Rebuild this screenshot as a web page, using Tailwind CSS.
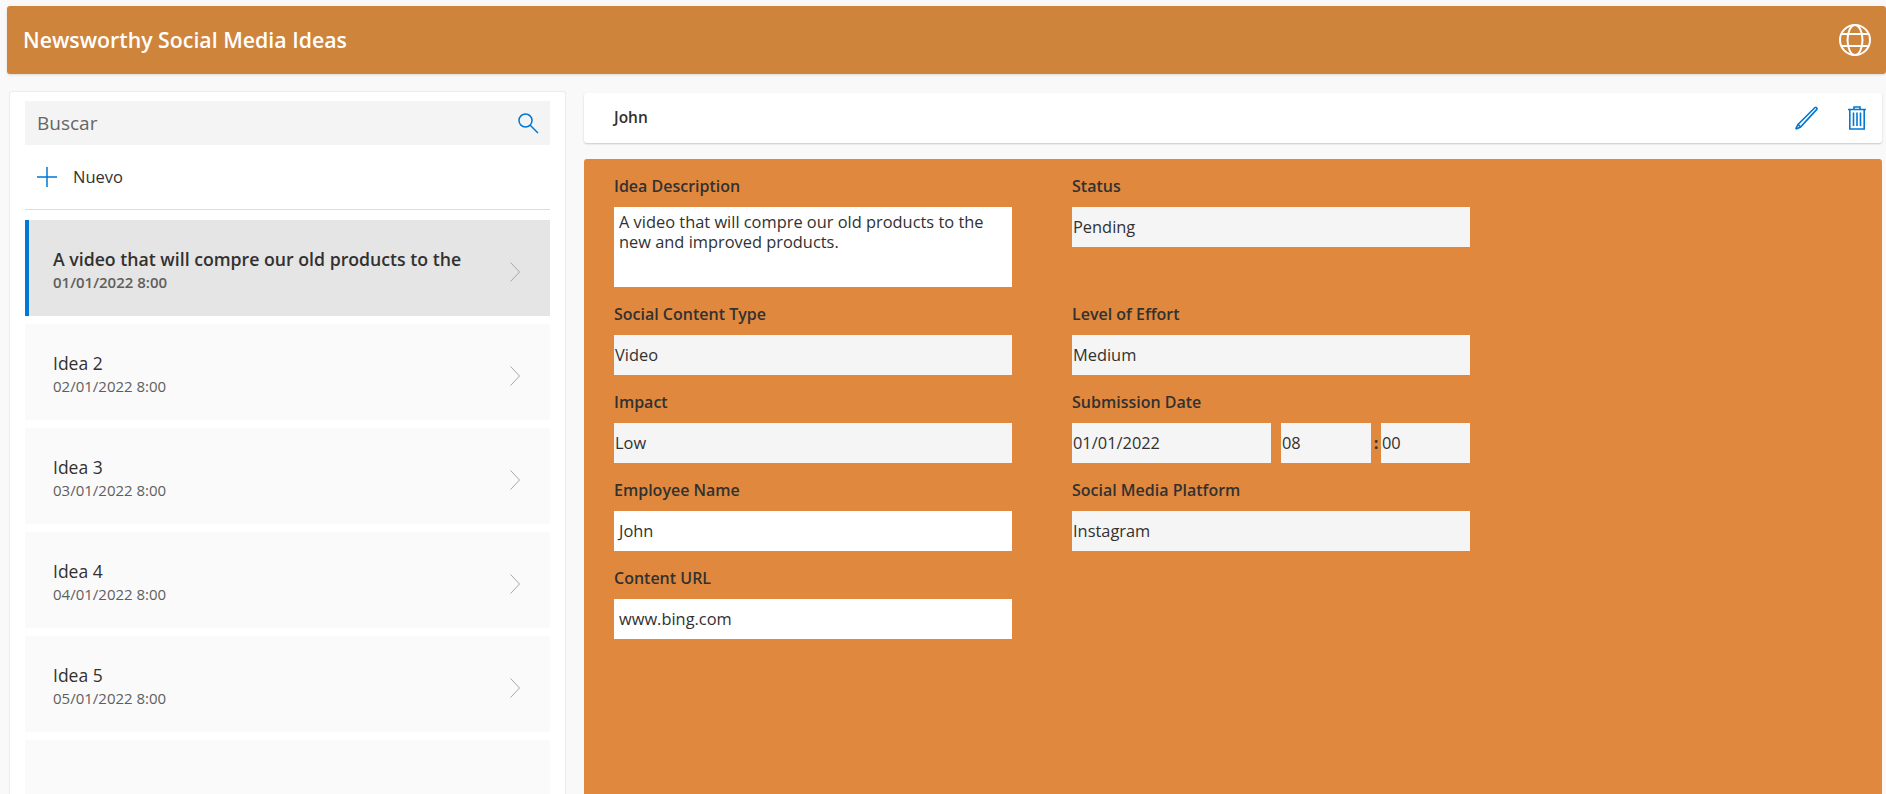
<!DOCTYPE html>
<html lang="es">
<head>
  <meta charset="UTF-8" />
  <title>Newsworthy Social Media Ideas</title>
  <script src="https://cdn.jsdelivr.net/npm/@tailwindcss/browser@4"></script>
</head>
<body class="bg-[#f9f9f9] font-['Open_Sans',sans-serif] text-[#323130] h-screen overflow-hidden">
  <!-- Barra superior -->
  <div class="pt-[6px] pl-[7px]">
    <header class="h-[68px] bg-[#cf843c] rounded-[3px] shadow-sm flex justify-between items-center pl-[16px] pr-[15px]">
      <h1 class="text-[21.3px] font-semibold text-white">Newsworthy Social Media Ideas</h1>
      <svg class="w-8 h-8" viewBox="0 0 32 32" fill="none" stroke="#fff" stroke-width="2">
        <circle cx="16" cy="16" r="15"/>
        <ellipse cx="16" cy="16" rx="7.5" ry="15"/>
        <path d="M3 10h26M3 22h26"/>
      </svg>
    </header>
  </div>

  <div class="flex items-start pl-[9px] pr-[4px] gap-[18px]">
    <!-- Lista -->
    <aside class="w-[557px] shrink-0 mt-[17px] h-[703px] overflow-hidden bg-white rounded-t-[3px] border border-b-0 border-[#ececec] px-[15px] pt-[9px]">
      <div class="h-[44px] bg-[#f4f4f4] flex items-center justify-between pl-[12px] pr-[11px]">
        <span class="text-[19px] text-[#666]">Buscar</span>
        <svg class="w-[22px] h-[22px]" viewBox="0 0 22 22" fill="none" stroke="#0078d4" stroke-width="1.5">
          <circle cx="8.5" cy="8.5" r="6.5"/>
          <path d="M13.2 13.2 21 21"/>
        </svg>
      </div>
      <div class="h-[65px] flex items-center pl-[12px] gap-[16px] border-b border-[#dcdcdc]">
        <svg class="w-5 h-5" viewBox="0 0 20 20" stroke="#0078d4" stroke-width="1.5">
          <path d="M10 0v20M0 10h20"/>
        </svg>
        <span class="text-[16.500px]">Nuevo</span>
      </div>

      <ul class="mt-[10px] flex flex-col gap-2">
        <li class="h-[96px] shrink-0 bg-[#e5e5e5] border-l-4 border-[#0078d4] flex items-center justify-between pl-[24px] pr-[30px]">
          <div class="pt-[4px]">
            <p class="text-[17.700px] font-semibold leading-[24px]">A video that will compre our old products to the</p>
            <p class="text-[15px] font-semibold leading-[22px] text-[#605e5c]">01/01/2022 8:00</p>
          </div>
          <svg class="w-[10px] h-[20px] mt-2" viewBox="0 0 10 20" fill="none" stroke="#a6a6a6"><path d="M.5.5 9.500 10 .5 19.500"/></svg>
        </li>
        <li class="h-[96px] shrink-0 bg-[#fafafa] flex items-center justify-between pl-[28px] pr-[30px]">
          <div class="pt-[4px]">
            <p class="text-[17.500px] leading-[24px]">Idea 2</p>
            <p class="text-[15px] leading-[22px] text-[#605e5c]">02/01/2022 8:00</p>
          </div>
          <svg class="w-[10px] h-[20px] mt-2" viewBox="0 0 10 20" fill="none" stroke="#a6a6a6"><path d="M.5.5 9.500 10 .5 19.500"/></svg>
        </li>
        <li class="h-[96px] shrink-0 bg-[#fafafa] flex items-center justify-between pl-[28px] pr-[30px]">
          <div class="pt-[4px]">
            <p class="text-[17.500px] leading-[24px]">Idea 3</p>
            <p class="text-[15px] leading-[22px] text-[#605e5c]">03/01/2022 8:00</p>
          </div>
          <svg class="w-[10px] h-[20px] mt-2" viewBox="0 0 10 20" fill="none" stroke="#a6a6a6"><path d="M.5.5 9.500 10 .5 19.500"/></svg>
        </li>
        <li class="h-[96px] shrink-0 bg-[#fafafa] flex items-center justify-between pl-[28px] pr-[30px]">
          <div class="pt-[4px]">
            <p class="text-[17.500px] leading-[24px]">Idea 4</p>
            <p class="text-[15px] leading-[22px] text-[#605e5c]">04/01/2022 8:00</p>
          </div>
          <svg class="w-[10px] h-[20px] mt-2" viewBox="0 0 10 20" fill="none" stroke="#a6a6a6"><path d="M.5.5 9.500 10 .5 19.500"/></svg>
        </li>
        <li class="h-[96px] shrink-0 bg-[#fafafa] flex items-center justify-between pl-[28px] pr-[30px]">
          <div class="pt-[4px]">
            <p class="text-[17.500px] leading-[24px]">Idea 5</p>
            <p class="text-[15px] leading-[22px] text-[#605e5c]">05/01/2022 8:00</p>
          </div>
          <svg class="w-[10px] h-[20px] mt-2" viewBox="0 0 10 20" fill="none" stroke="#a6a6a6"><path d="M.5.5 9.500 10 .5 19.500"/></svg>
        </li>
        <li class="h-[96px] shrink-0 bg-[#fafafa]"></li>
      </ul>
    </aside>

    <!-- Detalle -->
    <main class="flex-1 mt-[19px]">
      <div class="h-[50px] bg-white rounded-[3px] shadow-[0_1px_2px_rgba(0,0,0,0.2)] flex items-center justify-between pl-[30px] pr-[16px]">
        <span class="text-[15.500px] font-semibold">John</span>
        <div class="flex items-center gap-[29px]">
          <svg class="w-6 h-6" viewBox="0 0 24 24" fill="none" stroke="#0078d4" stroke-width="1.6">
            <path d="M20 1.500c1-.8 2.600.8 1.800 1.900L5.500 21l-3.700 1.800c-.5.2-.9-.2-.7-.7L3 18.400Z"/>
            <path d="M3 18.400 5.500 21"/>
          </svg>
          <svg class="w-[18px] h-6" viewBox="0 0 18 24" fill="none" stroke="#0078d4" stroke-width="1.6">
            <path d="M0 3.500h18M6 3.500V1h6v2.500M1.800 3.500V23h14.400V3.500M5.500 6.500V20M9 6.500V20M12.500 6.500V20"/>
          </svg>
        </div>
      </div>

      <section class="mt-[16px] h-[635px] bg-[#e0893e] rounded-t-[3px] pl-[30px]">
        <div class="grid grid-cols-[398px_398px] gap-x-[60px] text-[16.400px]">
          <div>
            <label class="block h-12 pt-[17px] leading-[20px] text-[16px] font-semibold">Idea Description</label>
            <div class="h-[80px] bg-white pl-[5px] pt-[5px] leading-[20px]">A video that will compre our old products to the new and improved products.</div>
          </div>
          <div>
            <label class="block h-12 pt-[17px] leading-[20px] text-[16px] font-semibold">Status</label>
            <div class="h-[40px] bg-[#f5f5f5] pl-[1px] flex items-center">Pending</div>
          </div>

          <div>
            <label class="block h-12 pt-[17px] leading-[20px] text-[16px] font-semibold">Social Content Type</label>
            <div class="h-[40px] bg-[#f5f5f5] pl-[1px] flex items-center">Video</div>
          </div>
          <div>
            <label class="block h-12 pt-[17px] leading-[20px] text-[16px] font-semibold">Level of Effort</label>
            <div class="h-[40px] bg-[#f5f5f5] pl-[1px] flex items-center">Medium</div>
          </div>

          <div>
            <label class="block h-12 pt-[17px] leading-[20px] text-[16px] font-semibold">Impact</label>
            <div class="h-[40px] bg-[#f5f5f5] pl-[1px] flex items-center">Low</div>
          </div>
          <div>
            <label class="block h-12 pt-[17px] leading-[20px] text-[16px] font-semibold">Submission Date</label>
            <div class="flex">
              <div class="w-[199px] h-[40px] bg-[#f5f5f5] pl-[1px] flex items-center">01/01/2022</div>
              <div class="w-[90px] h-[40px] ml-[10px] bg-[#f5f5f5] pl-[1px] flex items-center">08</div>
              <div class="w-[10px] text-center font-bold leading-[40px]">:</div>
              <div class="w-[89px] h-[40px] bg-[#f5f5f5] pl-[1px] flex items-center">00</div>
            </div>
          </div>

          <div>
            <label class="block h-12 pt-[17px] leading-[20px] text-[16px] font-semibold">Employee Name</label>
            <div class="h-[40px] bg-white pl-[5px] flex items-center">John</div>
          </div>
          <div>
            <label class="block h-12 pt-[17px] leading-[20px] text-[16px] font-semibold">Social Media Platform</label>
            <div class="h-[40px] bg-[#f5f5f5] pl-[1px] flex items-center">Instagram</div>
          </div>

          <div>
            <label class="block h-12 pt-[17px] leading-[20px] text-[16px] font-semibold">Content URL</label>
            <div class="h-[40px] bg-white pl-[5px] flex items-center">www.bing.com</div>
          </div>
        </div>
      </section>
    </main>
  </div>
</body>
</html>
